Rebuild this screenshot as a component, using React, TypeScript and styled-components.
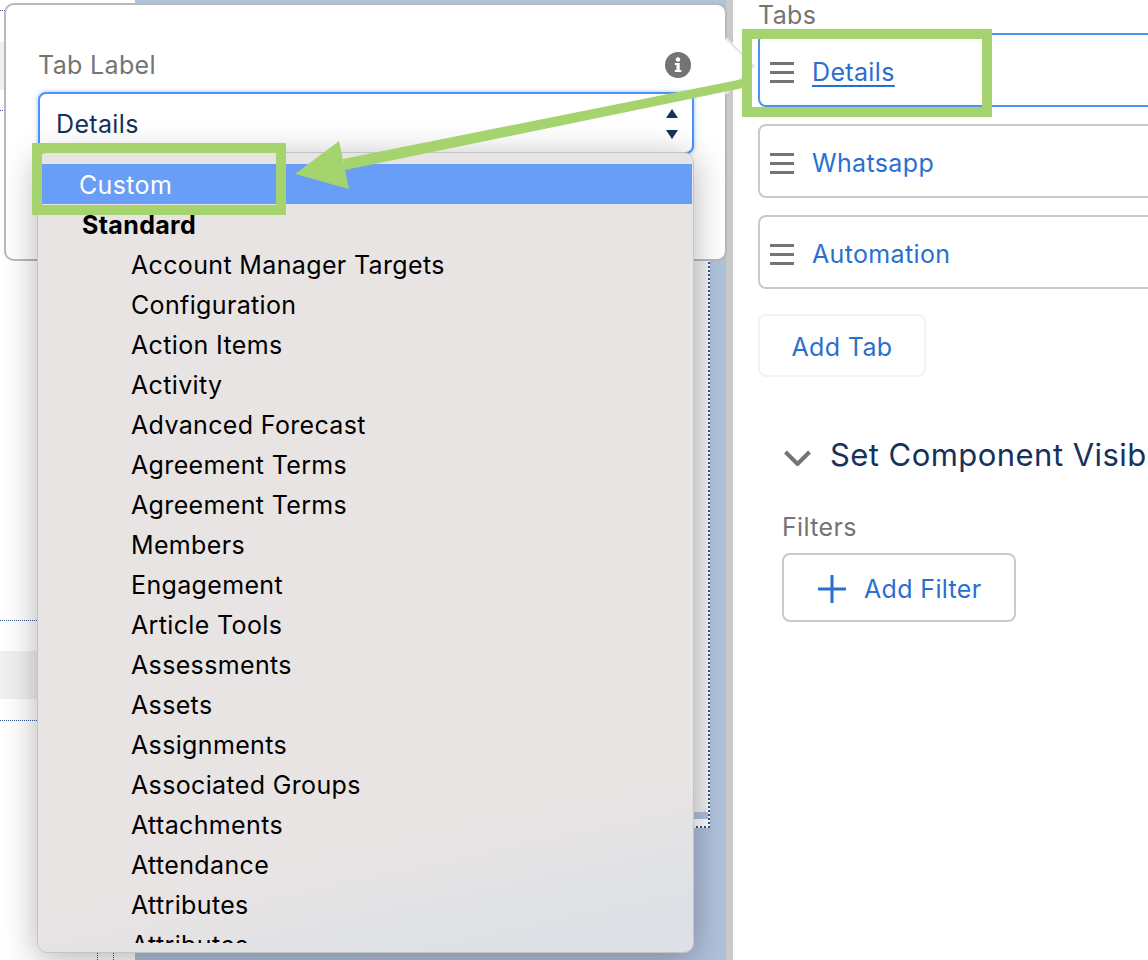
import React from "react";
import styled, { createGlobalStyle } from "styled-components";

const GlobalStyle = createGlobalStyle`
  html, body {
    margin: 0;
    padding: 0;
    background: #ffffff;
    overflow: hidden;
  }
  * {
    box-sizing: border-box;
  }
`;

const Stage = styled.div`
  position: relative;
  display: flex;
  width: 1148px;
  height: 960px;
  overflow: hidden;
  font-family: Inter, "Noto Sans", sans-serif;
  font-size: 25px;
  line-height: 30px;
  letter-spacing: 0.35px;
`;

const Workspace = styled.div`
  display: flex;
  width: 733px;
  flex: none;
  background: #b0c1dc;
  border-right: 7px solid #c9c9c9;
`;

const Gutter = styled.div`
  display: flex;
  flex-direction: column;
  width: 135px;
  flex: none;
  background: #ffffff;
`;

const GutterRow = styled.div<{ $height: number; $shaded?: boolean }>`
  height: ${(p) => p.$height}px;
  flex: none;
  background: ${(p) => (p.$shaded ? "#f0f0f0" : "transparent")};
`;

const DottedRule = styled.div`
  height: 0;
  flex: none;
  border-top: 1px dotted #33558f;
`;

const GutterFoot = styled.div`
  width: 17px;
  height: 8px;
  flex: none;
  margin: auto 0 0 97px;
  border-left: 1px dotted #555555;
  border-right: 1px dotted #555555;
`;

const Sheet = styled.div`
  display: flex;
  flex-direction: column;
  width: 555px;
  height: 825px;
  margin: 3px 0 0 20px;
  background: #ffffff;
  border-right: 2px dotted #33558f;
  border-bottom: 2px dotted #33558f;
`;

const SheetCard = styled.div`
  height: 809px;
  flex: none;
  margin-right: 1px;
  background: linear-gradient(90deg, #e2e2e2, #f0f0f0 50%);
  border-bottom-right-radius: 6px;
  box-shadow: 0 1px 1px #b8b8b8;
`;

const SheetBand = styled.div`
  height: 7px;
  flex: none;
  background: #b0c1dc;
`;

const Popover = styled.div`
  position: absolute;
  left: 4px;
  top: 3px;
  width: 723px;
  height: 258px;
  padding: 45px 31px 0 32px;
  background: #ffffff;
  border: 2px solid #b9b9b9;
  border-radius: 10px;
`;

const Nubbin = styled.div`
  position: absolute;
  right: -22px;
  top: 41px;
  width: 40px;
  height: 40px;
  background: #ffffff;
  border-top: 2px solid #e0e4ee;
  border-right: 2px solid #e0e4ee;
  transform: rotate(45deg);
`;

const LabelRow = styled.div`
  display: flex;
  align-items: center;
  justify-content: space-between;
  height: 30px;
  padding-right: 3px;
  color: #747474;
`;

const SelectWrap = styled.div`
  position: relative;
  width: 656px;
  margin-top: 12px;
`;

const SelectBox = styled.div`
  display: flex;
  align-items: center;
  justify-content: space-between;
  height: 62px;
  padding: 2px 14px 0 16px;
  background: #ffffff;
  border: 2px solid #4b92f3;
  border-radius: 8px;
  box-shadow: 0 0 5px rgba(75, 146, 243, 0.55);
  color: #16325c;
`;

const Arrows = styled.div`
  display: flex;
  flex-direction: column;
  gap: 12px;
`;

const Menu = styled.div`
  position: absolute;
  left: -1px;
  top: 60px;
  width: 657px;
  height: 801px;
  padding: 11px 1px 0 1px;
  background: linear-gradient(168deg, #e9e4e4 82%, #dde1e5 94%);
  border: 1px solid #c4c4c4;
  border-radius: 10px;
  box-shadow: 0 6px 34px rgba(0, 0, 0, 0.3);
  color: #000000;
`;

const MenuScroll = styled.div`
  height: 779px;
  overflow: hidden;
`;

const MenuItem = styled.div<{ $kind?: "active" | "group" }>`
  display: flex;
  align-items: center;
  height: 40px;
  padding-top: 2px;
  padding-left: ${(p) =>
    p.$kind === "active" ? 40 : p.$kind === "group" ? 43 : 92}px;
  font-weight: ${(p) => (p.$kind === "group" ? 700 : 400)};
  background: ${(p) => (p.$kind === "active" ? "#689ef8" : "transparent")};
  color: ${(p) => (p.$kind === "active" ? "#ffffff" : "#000000")};
`;

const Panel = styled.div`
  display: flex;
  flex-direction: column;
  flex: 1;
  min-width: 0;
  padding-left: 25px;
  background: #ffffff;
`;

const FieldLabel = styled.div`
  height: 30px;
  color: #747474;
`;

const TabList = styled.div`
  display: flex;
  flex-direction: column;
  gap: 17px;
  width: 460px;
  margin-top: 3px;
`;

const TabRow = styled.div<{ $active?: boolean }>`
  display: flex;
  align-items: center;
  gap: 18px;
  height: 74px;
  padding: 4px 0 0 10px;
  border: 2px solid ${(p) => (p.$active ? "#4b92f3" : "#c9c9c9")};
  border-radius: 8px;
`;

const TabLink = styled.a<{ $active?: boolean }>`
  color: #2a6fd0;
  text-decoration: ${(p) => (p.$active ? "underline" : "none")};
  text-underline-offset: 4px;
  text-decoration-thickness: 2px;
`;

const AddTabButton = styled.div`
  display: flex;
  align-items: center;
  justify-content: center;
  width: 168px;
  height: 63px;
  margin-top: 25px;
  padding-top: 2px;
  border: 2px solid #f3f3f3;
  border-radius: 8px;
  color: #2a6fd0;
`;

const Section = styled.div`
  display: flex;
  flex-direction: column;
  margin: 56px 0 0 24px;
`;

const SectionHeader = styled.div`
  display: flex;
  align-items: center;
  gap: 19px;
  height: 44px;
  padding-left: 2px;
  white-space: nowrap;
  font-size: 31px;
  letter-spacing: 0.45px;
  color: #16325c;
`;

const FilterLabel = styled(FieldLabel)`
  margin-top: 35px;
`;

const AddFilterButton = styled.div`
  display: flex;
  align-items: center;
  gap: 18px;
  width: 234px;
  height: 69px;
  margin-top: 11px;
  padding: 2px 0 0 34px;
  border: 2px solid #c9c9c9;
  border-radius: 8px;
  color: #2a6fd0;
`;

const IconSlot = styled.span`
  display: flex;
  flex: none;
`;

const ChevronSlot = styled(IconSlot)`
  margin-top: 5px;
`;

const Annotations = styled.svg`
  position: absolute;
  left: 0;
  top: 0;
  pointer-events: none;
`;

const GREEN = "#a5d36e";

const menuItems = [
  "Account Manager Targets",
  "Configuration",
  "Action Items",
  "Activity",
  "Advanced Forecast",
  "Agreement Terms",
  "Agreement Terms",
  "Members",
  "Engagement",
  "Article Tools",
  "Assessments",
  "Assets",
  "Assignments",
  "Associated Groups",
  "Attachments",
  "Attendance",
  "Attributes",
  "Attributes",
];

const tabs = ["Details", "Whatsapp", "Automation"];

const InfoIcon = () => (
  <svg width="26" height="26" viewBox="0 0 26 26">
    <circle cx="13" cy="13" r="13" fill="#747474" />
    <circle cx="13" cy="7.5" r="2.2" fill="#fff" />
    <path d="M9.8 11h4.9v7h1.7v2H9.8v-2h1.7v-5H9.8z" fill="#fff" />
  </svg>
);

const UpDownArrows = () => (
  <Arrows>
    <svg width="12" height="9" viewBox="0 0 12 9">
      <path d="M6 0l6 9H0z" fill="#16325c" />
    </svg>
    <svg width="12" height="9" viewBox="0 0 12 9">
      <path d="M0 0h12L6 9z" fill="#16325c" />
    </svg>
  </Arrows>
);

const DragHandle = () => (
  <svg width="24" height="21" viewBox="0 0 24 21">
    <path d="M0 1.5h24M0 10.5h24M0 19.5h24" stroke="#747474" strokeWidth="3" />
  </svg>
);

const Chevron = () => (
  <svg width="27" height="16" viewBox="0 0 27 16">
    <path d="M1.5 2l12 12 12-12" fill="none" stroke="#747474" strokeWidth="4" />
  </svg>
);

const PlusIcon = () => (
  <svg width="28" height="28" viewBox="0 0 28 28">
    <path d="M14 0v28M0 14h28" stroke="#2a6fd0" strokeWidth="3" />
  </svg>
);

const App: React.FC = () => {
  return (
    <Stage>
      <GlobalStyle />
      <Workspace>
        <Gutter>
          <GutterRow $height={10} />
          <DottedRule />
          <GutterRow $height={31} />
          <GutterRow $height={48} $shaded />
          <GutterRow $height={20} />
          <DottedRule />
          <GutterRow $height={509} />
          <DottedRule />
          <GutterRow $height={30} />
          <GutterRow $height={48} $shaded />
          <GutterRow $height={21} />
          <DottedRule />
          <GutterFoot />
        </Gutter>
        <Sheet>
          <SheetCard />
          <SheetBand />
        </Sheet>
      </Workspace>

      <Panel>
        <FieldLabel>Tabs</FieldLabel>
        <TabList>
          {tabs.map((tab, i) => (
            <TabRow key={tab} $active={i === 0}>
              <IconSlot>
                <DragHandle />
              </IconSlot>
              <TabLink $active={i === 0}>{tab}</TabLink>
            </TabRow>
          ))}
        </TabList>
        <AddTabButton>Add Tab</AddTabButton>
        <Section>
          <SectionHeader>
            <ChevronSlot>
              <Chevron />
            </ChevronSlot>
            Set Component Visibility
          </SectionHeader>
          <FilterLabel>Filters</FilterLabel>
          <AddFilterButton>
            <IconSlot>
              <PlusIcon />
            </IconSlot>
            Add Filter
          </AddFilterButton>
        </Section>
      </Panel>

      <Popover>
        <Nubbin />
        <LabelRow>
          Tab Label
          <InfoIcon />
        </LabelRow>
        <SelectWrap>
          <SelectBox>
            Details
            <UpDownArrows />
          </SelectBox>
          <Menu>
            <MenuScroll>
              <MenuItem $kind="active">Custom</MenuItem>
              <MenuItem $kind="group">Standard</MenuItem>
              {menuItems.map((item, i) => (
                <MenuItem key={i}>{item}</MenuItem>
              ))}
            </MenuScroll>
          </Menu>
        </SelectWrap>
      </Popover>

      <Annotations width="1148" height="960" viewBox="0 0 1148 960">
        <rect x="37" y="148" width="244" height="62" fill="none" stroke={GREEN} strokeWidth="10" />
        <rect x="747" y="34" width="240" height="78" fill="none" stroke={GREEN} strokeWidth="10" />
        <polygon points="743,79 743,88 345,170 343,159" fill={GREEN} />
        <polygon points="295,174 339,141 349,189" fill={GREEN} />
      </Annotations>
    </Stage>
  );
};

export default App;
